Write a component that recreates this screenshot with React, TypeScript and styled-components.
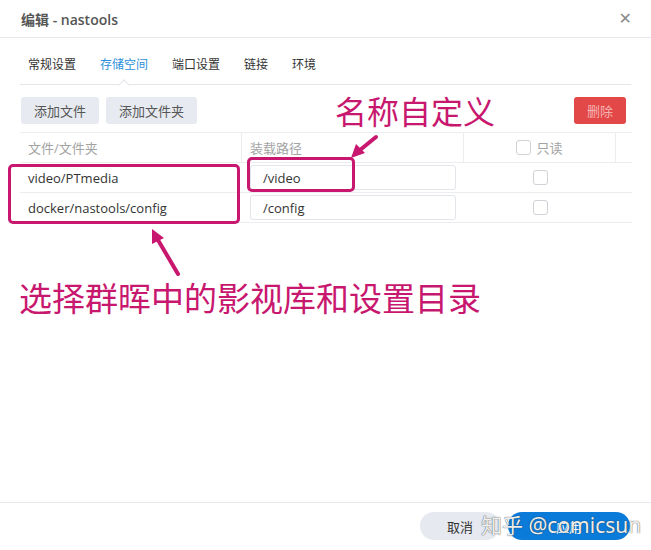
import styled, { createGlobalStyle } from 'styled-components';

const Global = createGlobalStyle`
  html, body {
    margin: 0;
    padding: 0;
    background: #fff;
  }
  body {
    font-family: 'Open Sans', 'Noto Sans CJK SC', sans-serif;
    color: #333;
  }
`;

const Dialog = styled.div`
  position: relative;
  width: 651px;
  height: 550px;
  display: flex;
  flex-direction: column;
  background: #fff;
  overflow: hidden;
`;

const Header = styled.div`
  height: 37px;
  flex-shrink: 0;
  border-bottom: 1px solid #e6e8eb;
  display: flex;
  align-items: center;
  justify-content: space-between;
  padding: 0 19px 0 21px;
`;

const Title = styled.div`
  font-size: 14px;
  font-weight: 600;
  color: #555;
`;

const Close = styled.div`
  font-family: 'DejaVu Sans', sans-serif;
  font-size: 16px;
  font-weight: bold;
  color: #8a8a8a;
`;

const TabBar = styled.div`
  margin: 0 20px;
  height: 46px;
  flex-shrink: 0;
  display: flex;
  align-items: flex-end;
  gap: 8px;
  border-bottom: 1px solid #e3e6ea;
`;

const Tab = styled.div<{ $active?: boolean }>`
  position: relative;
  padding: 0 8px 10px;
  font-size: 12px;
  line-height: 18px;
  color: ${p => (p.$active ? '#2d8fd9' : '#333')};

  ${p =>
    p.$active &&
    `
    &::after {
      content: '';
      position: absolute;
      left: 50%;
      bottom: -5px;
      width: 7px;
      height: 7px;
      margin-left: -4px;
      background: #fff;
      border-left: 1px solid #e3e6ea;
      border-top: 1px solid #e3e6ea;
      transform: rotate(45deg);
    }
  `}
`;

const Toolbar = styled.div`
  margin: 0 25px 0 21px;
  padding: 12px 0 8px;
  display: flex;
  gap: 7px;
`;

const Button = styled.button<{ $kind?: 'default' | 'danger' }>`
  height: 27px;
  padding: 0 13px;
  border: none;
  border-radius: 3px;
  font-family: inherit;
  font-size: 13px;
  background: ${p => (p.$kind === 'danger' ? '#e24848' : '#e7ebf1')};
  color: ${p => (p.$kind === 'danger' ? '#f6b3b3' : '#555')};
`;

const Spacer = styled.div`
  flex: 1;
`;

const Table = styled.div`
  margin-left: 20px;
  width: 612px;
`;

const Row = styled.div<{ $head?: boolean }>`
  display: grid;
  grid-template-columns: 222px 222px 152px 16px;
  height: 29px;
  border-bottom: 1px solid #ebedf0;
  ${p => p.$head && 'border-top: 1px solid #ebedf0;'}
`;

const Cell = styled.div<{ $head?: boolean; $center?: boolean }>`
  display: flex;
  align-items: center;
  justify-content: ${p => (p.$center ? 'center' : 'flex-start')};
  padding-left: ${p => (p.$center ? '0' : '8px')};
  font-size: 13px;
  color: ${p => (p.$head ? '#a3a3a3' : '#333')};
  ${p => p.$head && 'border-right: 1px solid #ebedf0;'}
  &:last-child {
    border-right: none;
  }
`;

const PathInput = styled.div`
  width: 206px;
  height: 25px;
  box-sizing: border-box;
  border: 1px solid #e2e5ea;
  border-radius: 3px;
  padding-left: 12px;
  display: flex;
  align-items: center;
  font-size: 13px;
  color: #333;
`;

const Check = styled.span`
  display: inline-block;
  width: 15px;
  height: 15px;
  box-sizing: border-box;
  border: 1px solid #cfd3d8;
  border-radius: 3px;
  background: #fff;
`;

const CheckLabel = styled.span`
  margin-left: 5px;
`;

const Footer = styled.div`
  box-sizing: border-box;
  height: 48px;
  flex-shrink: 0;
  border-top: 1px solid #e6e8eb;
  display: flex;
  justify-content: flex-end;
  align-items: flex-start;
  padding: 9px 21px 0 0;
  gap: 8px;
`;

const Pill = styled.button<{ $primary?: boolean }>`
  height: 28px;
  width: ${p => (p.$primary ? '122px' : '80px')};
  border: none;
  border-radius: 14px;
  font-family: inherit;
  font-size: 13px;
  background: ${p => (p.$primary ? '#0b7bd9' : '#e6eaf0')};
  color: ${p => (p.$primary ? '#fff' : '#333')};
`;

/* annotations drawn over the screenshot */
const Mark = styled.div<{ $x: number; $y: number; $w: number; $h: number }>`
  position: absolute;
  left: ${p => p.$x}px;
  top: ${p => p.$y}px;
  width: ${p => p.$w}px;
  height: ${p => p.$h}px;
  box-sizing: border-box;
  border: 3px solid #c8176e;
  border-radius: 5px;
`;

const Note = styled.div<{ $x: number; $y: number; $size: number }>`
  position: absolute;
  left: ${p => p.$x}px;
  top: ${p => p.$y}px;
  font-family: 'Noto Sans CJK SC', sans-serif;
  font-size: ${p => p.$size}px;
  line-height: 1;
  color: #c8176e;
  white-space: nowrap;
`;

const Arrows = styled.svg`
  position: absolute;
  left: 0;
  top: 0;
  pointer-events: none;
`;

const Watermark = styled.div`
  position: absolute;
  left: 481px;
  top: 509px;
  font-family: 'Noto Sans', 'Noto Sans CJK SC', sans-serif;
  font-size: 21px;
  color: rgba(255, 255, 255, 0.92);
  text-shadow: 0 0 1px rgba(60, 60, 60, 0.8), 0 0 1px rgba(60, 60, 60, 0.6);
  white-space: nowrap;
`;

const rows = [
  { src: 'video/PTmedia', dest: '/video' },
  { src: 'docker/nastools/config', dest: '/config' },
];

export default function App() {
  return (
    <>
      <Global />
      <Dialog>
        <Header>
          <Title>编辑 - nastools</Title>
          <Close>✕</Close>
        </Header>
        <TabBar>
          <Tab>常规设置</Tab>
          <Tab $active>存储空间</Tab>
          <Tab>端口设置</Tab>
          <Tab>链接</Tab>
          <Tab>环境</Tab>
        </TabBar>
        <Toolbar>
          <Button>添加文件</Button>
          <Button>添加文件夹</Button>
          <Spacer />
          <Button $kind="danger">删除</Button>
        </Toolbar>
        <Table>
          <Row $head>
            <Cell $head>文件/文件夹</Cell>
            <Cell $head>装载路径</Cell>
            <Cell $head $center>
              <Check />
              <CheckLabel>只读</CheckLabel>
            </Cell>
            <Cell $head />
          </Row>
          {rows.map(r => (
            <Row key={r.src}>
              <Cell>{r.src}</Cell>
              <Cell>
                <PathInput>{r.dest}</PathInput>
              </Cell>
              <Cell $center>
                <Check />
              </Cell>
              <Cell />
            </Row>
          ))}
        </Table>
        <Spacer />
        <Footer>
          <Pill>取消</Pill>
          <Pill $primary>应用</Pill>
        </Footer>

        <Mark $x={8} $y={164} $w={232} $h={60} />
        <Mark $x={247} $y={157} $w={108} $h={35} />
        <Note $x={335} $y={94} $size={32}>名称自定义</Note>
        <Note $x={19} $y={281} $size={33}>选择群晖中的影视库和设置目录</Note>
        <Arrows width="651" height="550" viewBox="0 0 651 550">
          <g stroke="#c8176e" strokeWidth="4" strokeLinecap="round" fill="#c8176e">
            <line x1="376" y1="137" x2="360" y2="150" />
            <polygon points="351,158 356,144 365,153" stroke="none" />
            <line x1="178" y1="274" x2="158" y2="240" />
            <polygon points="152,229 152,244 164,238" stroke="none" />
          </g>
        </Arrows>
        <Watermark>知乎 @comicsun</Watermark>
      </Dialog>
    </>
  );
}
